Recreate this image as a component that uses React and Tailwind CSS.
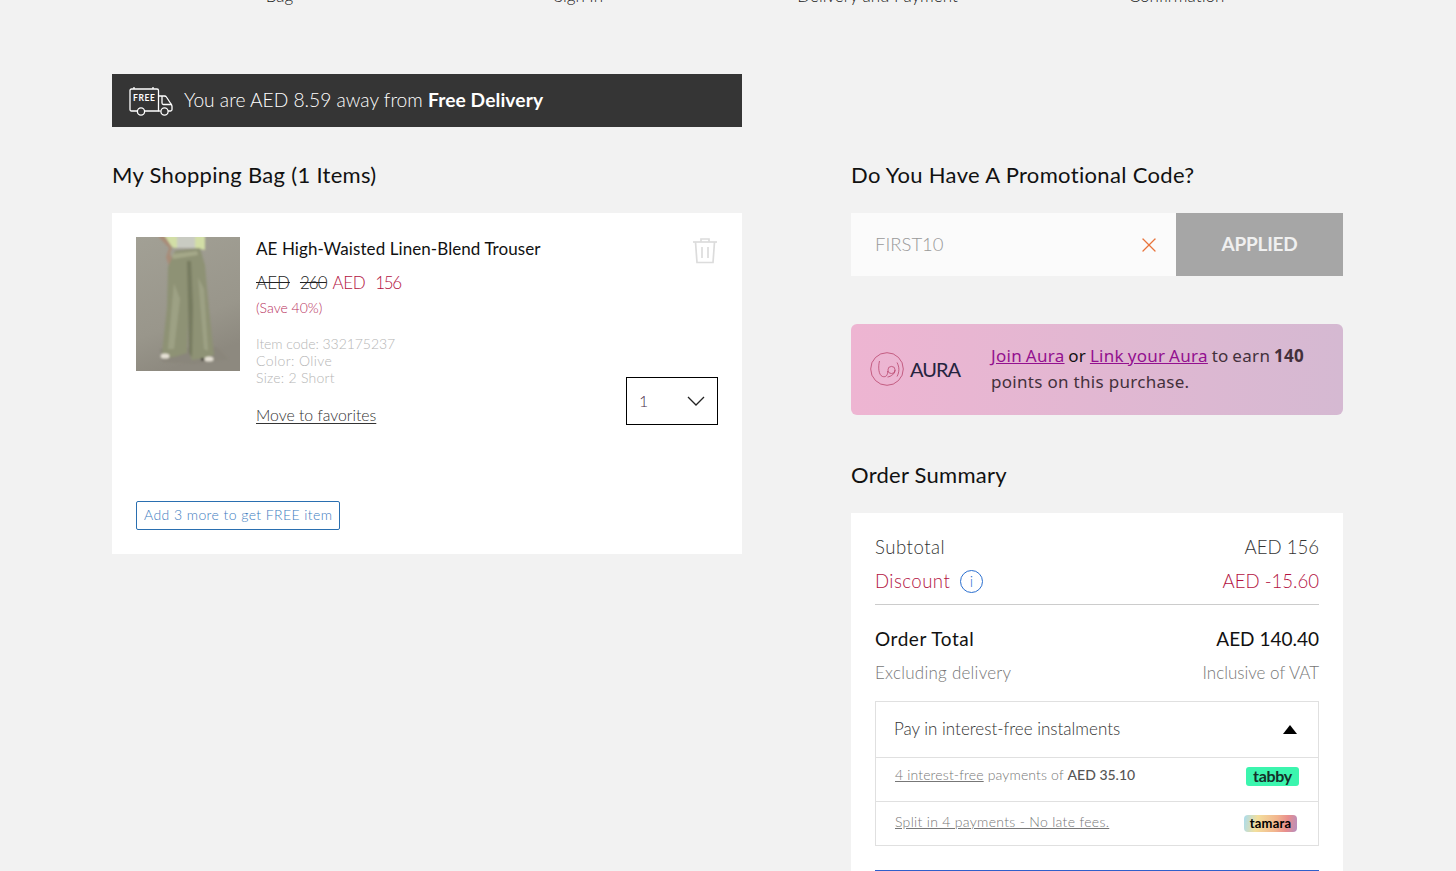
import { X } from 'lucide-react';

const steps = ['Bag', 'Sign In', 'Delivery and Payment', 'Confirmation'];

function FreeTruck() {
    return (
        <svg width="46" height="30" viewBox="0 0 46 30" fill="none" stroke="white" strokeWidth="1.3" className="shrink-0">
            <path d="M9 25H3.5C2.5 25 2 24.4 2 23.5V4.5C2 3.5 2.5 3 3.5 3H29C30 3 30.5 3.5 30.5 4.5V25H17" />
            <path d="M30.5 10H36.5C37.5 10 38 10.4 38.4 11L43 18C43.6 18.8 44 19.4 44 20.4V23.5C44 24.5 43.5 25 42.5 25H40" />
            <path d="M34 10V17C34 18 34.5 18.5 35.5 18.5H43.5" />
            <path d="M30.5 25H32.5" />
            <circle cx="13" cy="25.5" r="3.6" />
            <circle cx="36.5" cy="25.5" r="3.6" />
            <path d="M6 3V1M25 3V1" />
            <text x="5" y="15" fill="white" stroke="none" fontSize="8.5" fontWeight="700" letterSpacing="0.6" fontFamily="Lato, sans-serif">FREE</text>
        </svg>
    );
}

function TrousersPhoto() {
    return (
        <svg width="104" height="134" viewBox="0 0 104 134" className="block shrink-0">
            <defs>
                <linearGradient id="wall" x1="0" y1="0" x2="0.3" y2="1">
                    <stop offset="0" stopColor="#a2a095" />
                    <stop offset="0.7" stopColor="#99968b" />
                    <stop offset="1" stopColor="#8d897f" />
                </linearGradient>
                <filter id="soft"><feGaussianBlur stdDeviation="0.9" /></filter>
            </defs>
            <rect width="104" height="134" fill="url(#wall)" />
            <g filter="url(#soft)">
                <path d="M24 112L80 110L92 122L60 127L26 125Z" fill="#8a867b" />
                <path d="M21 -2H69L69 13L60 11H38L30 6Z" fill="#d2dea6" />
                <path d="M41 -2H59V11H41Z" fill="#c9cbc2" />
                <path d="M21 -2H28L36 10L34 17L39 28L33 29L30 20L33 11Z" fill="#a98c78" />
                <path d="M39 14L64 11L69 28L72 62L78 118L70 121L56 123L53 116L52.5 66L51 116L38 120L27 121L26 116L31 70L32 30Z" fill="#8e9275" />
                <path d="M51 24L52 66L53 116L56 120L57 70L55 24Z" fill="#777b61" />
                <path d="M38 46L32 112L38 112L44 62Z" fill="#9da184" />
                <path d="M62 40L68 112L72 114L68 52Z" fill="#9da184" />
                <path d="M36 17L61 14L62 18L37 22Z" fill="#a5a889" />
                <ellipse cx="29" cy="119" rx="4.5" ry="2.6" fill="#e6e1d5" />
                <ellipse cx="73" cy="122" rx="4.5" ry="2.6" fill="#e6e1d5" />
                <rect x="65" y="121" width="3" height="2.5" fill="#38332e" />
            </g>
        </svg>
    );
}

function TrashIcon() {
    return (
        <svg width="26" height="27" viewBox="0 0 26 27" fill="none" stroke="#dcdcdc" strokeWidth="1.7">
            <path d="M1 5H25" />
            <path d="M9 5V2H17V5" />
            <path d="M3.5 5L5 25.5H21L22.5 5" />
            <path d="M10 10V21M16 10V21" />
        </svg>
    );
}

function AuraLogo() {
    return (
        <div className="-mt-[2px] flex items-center gap-[6px]">
            <svg width="34" height="34" viewBox="0 0 34 34" fill="none" stroke="#b2375f" strokeWidth="0.7">
                <circle cx="17" cy="17" r="16.3" />
                <path d="M9.5 9C8 15 8.5 23 12.5 24.5C16 25.5 18 23 17.5 19" />
                <circle cx="21.5" cy="18" r="3.6" />
                <path d="M25 18C25 22 21 24.5 17.5 25" />
                <path d="M27 10.5C29.5 15 29.5 20 27 24.5" />
            </svg>
            <span className="text-[20px] leading-none font-normal tracking-[-1px] text-[#26243f]">AURA</span>
        </div>
    );
}

function SummaryRow({ label, value, labelClassName, className }) {
    return (
        <div className={`flex items-center justify-between ${className}`}>
            <span className={labelClassName}>{label}</span>
            <span>{value}</span>
        </div>
    );
}

export default function App() {
    return (
        <div className="h-[871px] overflow-hidden bg-[#f2f2f2] font-['Lato',sans-serif] font-light text-[#222]">
            {/* Checkout steps, scrolled mostly off the top */}
            <div className="-mt-[14px] ml-[130px] grid h-[88px] w-[1196px] grid-cols-4 text-center text-[17px] leading-[20px]">
                {steps.map(step => (
                    <span key={step}>{step}</span>
                ))}
            </div>

            <div className="ml-[112px] flex w-[1231px] justify-between">
                {/* Bag column */}
                <div className="w-[630px]">
                    <div className="flex h-[53px] items-center gap-[10px] bg-[#353535] pl-[16px] text-[19.2px] text-white">
                        <FreeTruck />
                        <span>You are AED 8.59 away from <span className="font-bold tracking-[0.1px]">Free Delivery</span></span>
                    </div>
                    <h2 className="mt-[34px] h-[52px] text-[22px] leading-[28px] font-normal tracking-[0.3px] text-[#111]">My Shopping Bag (1 Items)</h2>
                    <div className="h-[341px] bg-white px-[24px] pt-[24px]">
                        <div className="flex h-[264px]">
                            <TrousersPhoto />
                            <div className="ml-[16px] flex-1">
                                <div className="text-[17px] leading-[24px] font-normal tracking-[0.08px] text-[#111]">AE High-Waisted Linen-Blend Trouser</div>
                                <div className="mt-[10px] flex text-[17px] leading-[24px]">
                                    <span className="text-[#222] line-through">AED</span>
                                    <span className="ml-[10px] tracking-[-1px] text-[#222] line-through">260</span>
                                    <span className="ml-[6px] tracking-[-0.4px] text-[#b3123f]">AED</span>
                                    <span className="ml-[10px] tracking-[-1.4px] text-[#b3123f]">156</span>
                                </div>
                                <div className="mt-[3px] text-[14px] leading-[20px] text-[#b8305c]">(Save 40%)</div>
                                <div className="mt-[17px] text-[14px] leading-[17px] text-[#b5b5b5]">
                                    <div className="tracking-[-0.05px]">Item code: 332175237</div>
                                    <div className="tracking-[0.4px]">Color: Olive</div>
                                    <div className="tracking-[0.25px]">Size: 2 Short</div>
                                </div>
                                <div className="mt-[12px] flex items-start justify-between">
                                    <a className="mt-[7px] text-[15.8px] leading-[20px] text-[#333] underline underline-offset-2">Move to favorites</a>
                                    <div className="-mt-[21px] -mr-[1px] flex h-[48px] w-[92px] items-center justify-between border border-black px-[12px] text-[16px] text-[#4a2a4a]">
                                        <span>1</span>
                                        <svg width="18" height="10" viewBox="0 0 18 10" fill="none" stroke="#222" strokeWidth="1.3">
                                            <path d="M1 1L9 9L17 1" />
                                        </svg>
                                    </div>
                                </div>
                            </div>
                            <div className="-ml-[25px] h-[28px]"><TrashIcon /></div>
                        </div>
                        <button className="h-[29px] rounded-[2px] border border-[#2a6fb0] px-[7px] pb-[1px] text-[14px] leading-none font-light tracking-[0.42px] text-[#3d7cc0]">Add 3 more to get FREE item</button>
                    </div>
                </div>

                {/* Summary column */}
                <div className="mt-[87px] w-[492px]">
                    <h2 className="h-[52px] text-[22px] leading-[28px] font-normal tracking-[0.33px] text-[#111]">Do You Have A Promotional Code?</h2>
                    <div className="flex h-[63px]">
                        <div className="flex flex-1 items-center justify-between bg-[#fbfbfb] pr-[15px] pl-[24px] text-[18.5px] text-[#999]">
                            <span>FIRST10</span>
                            <X size={24} strokeWidth={1.3} className="text-[#e8743c]" />
                        </div>
                        <div className="flex w-[167px] items-center justify-center bg-[#a6a6a6] text-[19px] font-bold tracking-[-0.2px] text-[#f0f0f0]">APPLIED</div>
                    </div>

                    <div className="mt-[48px] flex h-[91px] items-center rounded-[6px] bg-gradient-to-r from-[#eeb5d2] to-[#d5b9d2] pl-[19px]">
                        <div className="w-[121px] shrink-0"><AuraLogo /></div>
                        <p className="-mt-[2px] font-['Noto_Sans',sans-serif] text-[17px] leading-[26px] font-normal tracking-[0.3px] text-[#43303b]">
                            <span className="[word-spacing:-1px]"><a className="text-[#93108f] underline">Join Aura</a> <span className="text-[#111]">or</span> <a className="text-[#93108f] underline">Link your Aura</a> to earn <b>140</b></span>
                            <br />points on this purchase.
                        </p>
                    </div>

                    <h2 className="mt-[46px] h-[52px] text-[22px] leading-[28px] font-normal tracking-[0.25px] text-[#111]">Order Summary</h2>
                    <div className="h-[400px] bg-white px-[24px] pt-[21px]">
                        <SummaryRow label="Subtotal" value="AED 156" labelClassName="tracking-[0.5px]" className="h-[28px] text-[18.6px] text-[#333]" />
                        <div className="mt-[6px] flex h-[28px] items-center justify-between text-[18.6px] text-[#b3123f]">
                            <span className="flex items-center gap-[10px] tracking-[0.45px]">
                                Discount
                                <span className="flex h-[23px] w-[23px] items-center justify-center rounded-full border border-[#2a6fd0] text-[15px] leading-none text-[#2a6fd0]">i</span>
                            </span>
                            <span>AED -15.60</span>
                        </div>
                        <div className="mt-[8px] border-t border-[#ccc]" />
                        <SummaryRow label="Order Total" value="AED 140.40" labelClassName="tracking-[0.55px]" className="mt-[20px] h-[28px] text-[19px] font-normal text-[#111]" />
                        <SummaryRow label="Excluding delivery" value="Inclusive of VAT" labelClassName="tracking-[0.25px]" className="mt-[6px] h-[28px] text-[17px] text-[#777]" />

                        <div className="mt-[14px] border border-[#e0e0e0]">
                            <div className="flex h-[55px] items-center justify-between pr-[21px] pl-[18px] text-[17px] text-[#333]">
                                <span className="-mt-[2px]">Pay in interest-free instalments</span>
                                <span className="h-0 w-0 border-x-[7px] border-b-[9px] border-x-transparent border-b-black" />
                            </div>
                            <div className="flex h-[44px] items-center justify-between border-t border-[#e0e0e0] px-[19px] text-[14px] tracking-[0.15px] text-[#777]">
                                <span className="-mt-[10px]"><span className="underline">4 interest-free</span> payments of <span className="font-medium tracking-normal text-[#555]">AED 35.10</span></span>
                                <span className="-mt-[7px] flex h-[19px] w-[53px] items-center justify-center rounded-[3px] bg-[#3bf5ae] text-[16px] leading-none font-bold tracking-[-0.3px] text-[#14302a]">tabby</span>
                            </div>
                            <div className="flex h-[44px] items-center justify-between border-t border-[#e0e0e0] pr-[21px] pl-[19px] text-[14px] text-[#777]">
                                <span className="-mt-[4px] tracking-[0.31px] underline">Split in 4 payments - No late fees.</span>
                                <span className="flex h-[17px] w-[53px] items-center justify-center rounded-[4px] bg-[linear-gradient(100deg,#a9dcef_0%,#f3df9c_25%,#f2b58e_60%,#e88d8d_80%,#b58fc0_100%)] text-[13px] leading-none font-bold tracking-[0.2px] text-black">tamara</span>
                            </div>
                        </div>

                        <div className="mt-[24px] border-t border-[#2f5fcb]" />
                    </div>
                </div>
            </div>
        </div>
    );
}
